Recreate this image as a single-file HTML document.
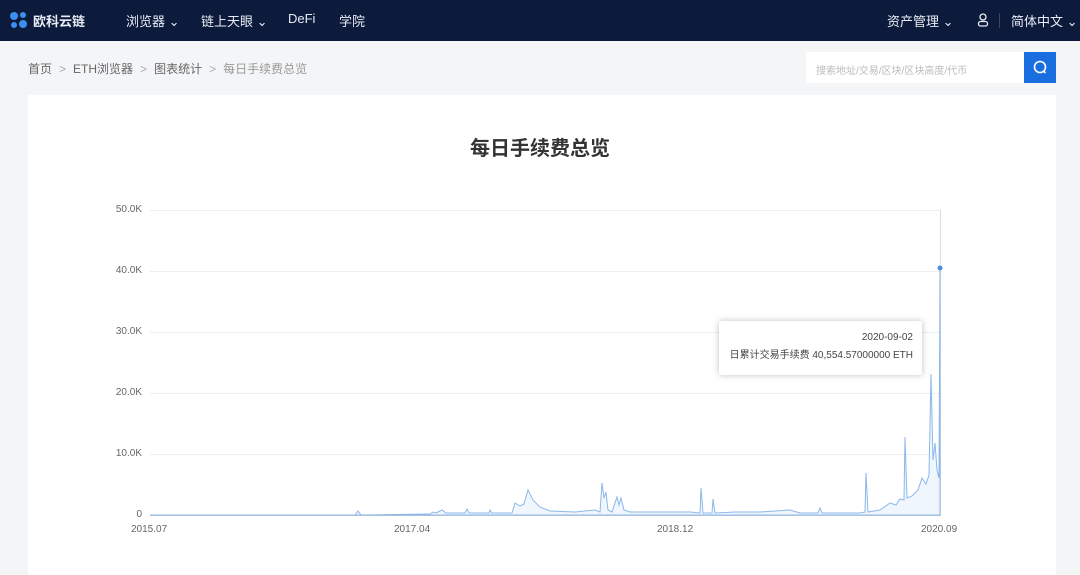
<!DOCTYPE html>
<html><head><meta charset="utf-8"><style>
*{margin:0;padding:0;box-sizing:border-box}
body{width:1080px;height:568px;overflow:hidden;background:#f4f5f7;font-family:"Liberation Sans","Noto Sans CJK SC",sans-serif;position:relative}
.nav{position:absolute;left:0;top:0;width:1080px;height:41px;background:#0c1a3b;color:#e8ecf4;font-size:13px}
.nav span{position:absolute;top:11px}
.crumb{position:absolute;left:28px;top:60px;font-size:12px;color:#666}
.crumb i{font-style:normal;color:#aaa;margin:0 7px}
.search{position:absolute;left:806px;top:52px;width:218px;height:31px;background:#fff;font-size:10px;color:#bbb;padding:10px 0 0 10px}
.btn{position:absolute;left:1024px;top:52px;width:32px;height:31px;background:#1a6fe0}
.card{position:absolute;left:28px;top:95px;width:1028px;height:480px;background:#fff}
.title{position:absolute;left:0;width:1080px;top:132px;text-align:center;font-size:20px;font-weight:bold;color:#333}
.yl{position:absolute;width:40px;text-align:right;left:102px;font-size:10px;color:#666}
.xl{position:absolute;top:524px;font-size:10px;color:#666}
.tip{position:absolute;left:719px;top:321px;width:203px;height:54px;background:#fff;box-shadow:0 0 6px rgba(0,0,0,.25);font-size:10px;color:#444;text-align:right;padding:8px 9px 0 0;line-height:18px}
</style></head><body>
<div class="nav">
<svg style="position:absolute;left:9px;top:11px" width="22" height="20"><circle cx="5" cy="5" r="4" fill="#3a8ff0"/><circle cx="14" cy="4" r="3" fill="#3a8ff0"/><circle cx="5" cy="14" r="3" fill="#3a8ff0"/><circle cx="14" cy="13" r="4" fill="#3a8ff0"/></svg>
<span style="left:33px;font-weight:bold">欧科云链</span>
<span style="left:126px">浏览器 ⌄</span>
<span style="left:201px">链上天眼 ⌄</span>
<span style="left:288px">DeFi</span>
<span style="left:339px">学院</span>
<span style="left:887px">资产管理 ⌄</span>
<svg style="position:absolute;left:977px;top:13px" width="12" height="14"><circle cx="6" cy="4" r="3" fill="none" stroke="#e8ecf4" stroke-width="1.3"/><rect x="1.5" y="8.5" width="9" height="4.5" rx="2" fill="none" stroke="#e8ecf4" stroke-width="1.3"/></svg>
<div style="position:absolute;left:999px;top:13px;width:1px;height:15px;background:#445"></div>
<span style="left:1011px">简体中文 ⌄</span>
</div>
<div class="crumb">首页<i>&gt;</i>ETH浏览器<i>&gt;</i>图表统计<i>&gt;</i><span style="color:#999">每日手续费总览</span></div>
<div class="search">搜索地址/交易/区块/区块高度/代币</div>
<div class="btn"><svg width="32" height="31"><circle cx="16" cy="15" r="5.5" fill="none" stroke="#fff" stroke-width="1.6"/><line x1="19.5" y1="19" x2="21.5" y2="21" stroke="#fff" stroke-width="1.6"/></svg></div>
<div class="card"></div>
<div class="title">每日手续费总览</div>
<div class="yl" style="top:204px">50.0K</div>
<div class="yl" style="top:265px">40.0K</div>
<div class="yl" style="top:326px">30.0K</div>
<div class="yl" style="top:387px">20.0K</div>
<div class="yl" style="top:448px">10.0K</div>
<div class="yl" style="top:509px">0</div>
<div class="xl" style="left:131px">2015.07</div>
<div class="xl" style="left:394px">2017.04</div>
<div class="xl" style="left:657px">2018.12</div>
<div class="xl" style="left:921px">2020.09</div>
<svg style="position:absolute;left:0;top:0" width="1080" height="568">
<g stroke="#eceef2" stroke-width="1"><line x1="150" y1="210.5" x2="940" y2="210.5"/><line x1="150" y1="271.5" x2="940" y2="271.5"/><line x1="150" y1="332.5" x2="940" y2="332.5"/><line x1="150" y1="393.5" x2="940" y2="393.5"/><line x1="150" y1="454.5" x2="940" y2="454.5"/></g>
<line x1="940.5" y1="210" x2="940.5" y2="516" stroke="#ddd"/>
<line x1="150" y1="515.5" x2="940" y2="515.5" stroke="#ccc"/>
<path d="M150 515 L355 515 L358 511 L361 515 L430 514 L433 512 L436 513 L442 510 L446 513 L465 513 L467 509 L469 513 L489 513 L490 510 L492 513 L512 513 L515 503 L520 506 L524 504 L528 490 L533 500 L540 507 L550 511 L575 512 L595 510 L600 512 L602 483 L604 498 L606 492 L608 510 L612 512 L617 497 L619 505 L621 498 L624 510 L630 512 L660 512 L690 512 L700 513 L701 488 L703 513 L712 513 L713 499 L715 513 L735 512 L760 512 L790 510 L800 513 L818 513 L820 508 L822 513 L845 513 L860 513 L865 512 L866 473 L868 512 L880 510 L890 503 L896 505 L900 499 L904 500 L905 437 L907 498 L912 496 L918 490 L922 478 L926 484 L929 475 L931 374 L933 460 L935 443 L937 470 L939 478 L940 268 L940 515 Z" fill="#f0f6fd" stroke="#8bb8ea" stroke-width="1"/>
<circle cx="940" cy="268" r="2.5" fill="#4a90e2"/>
</svg>
<div class="tip">2020-09-02<br>日累计交易手续费 40,554.57000000 ETH</div>
</body></html>
